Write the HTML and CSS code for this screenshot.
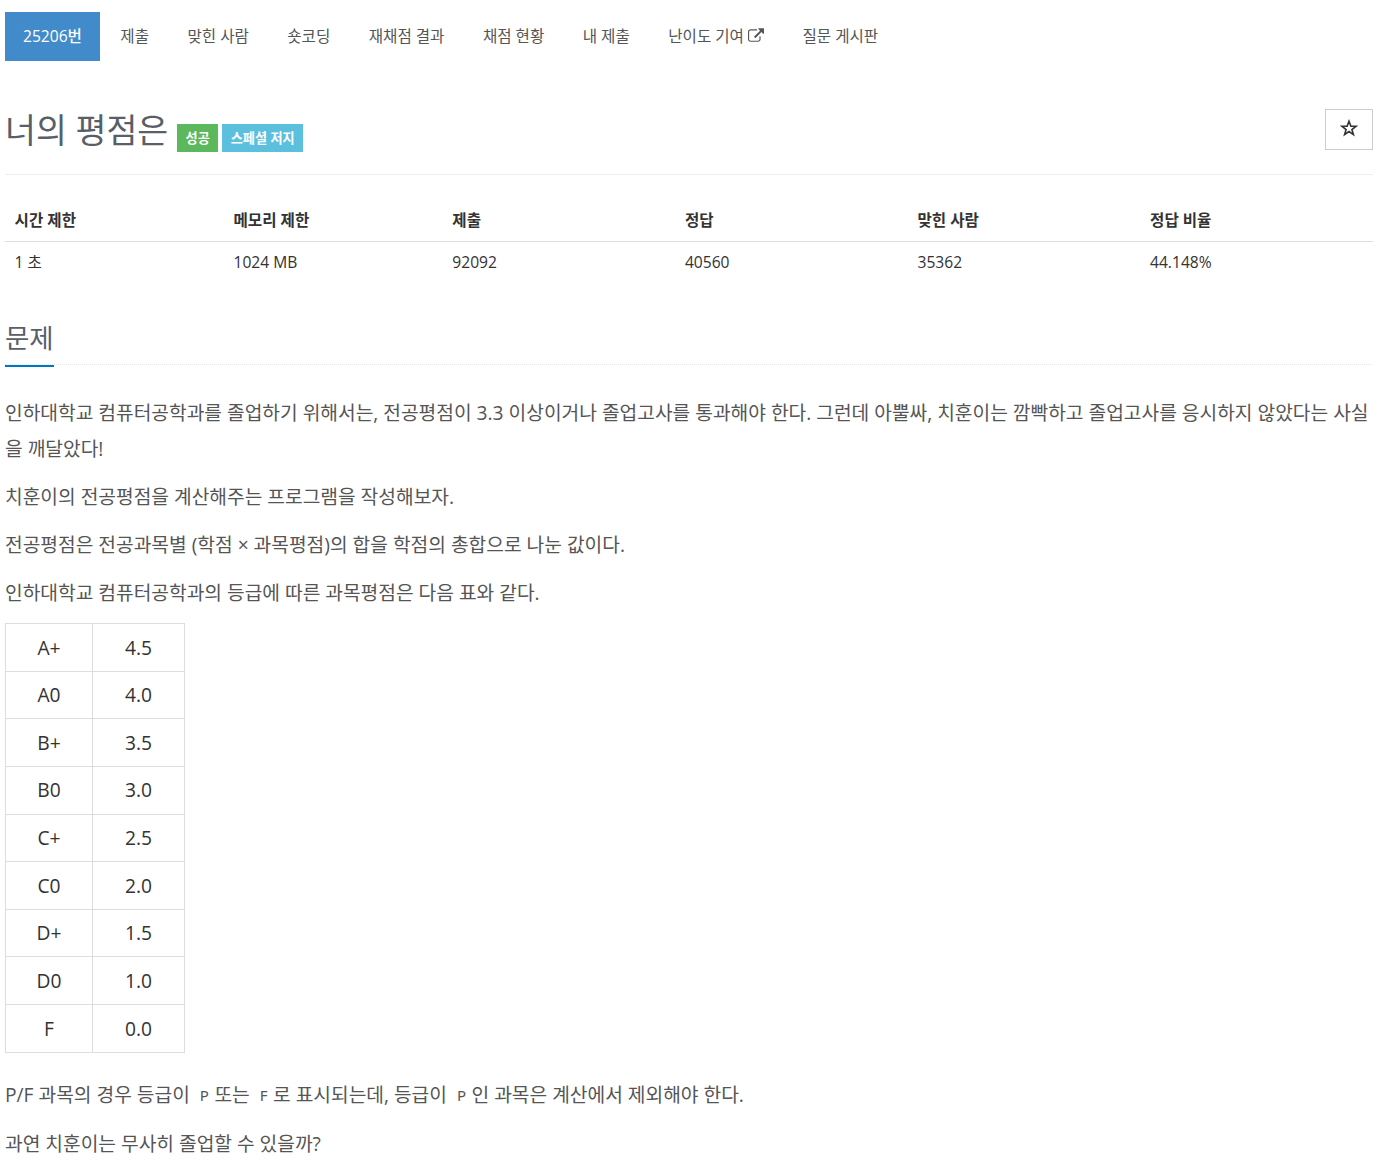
FILE: index.html
```html
<!DOCTYPE html>
<html lang="ko">
<head>
  <meta charset="UTF-8">
  <meta name="viewport" content="width=device-width, initial-scale=1.0">
  <title>25206번: 너의 평점은</title>
  <link rel="stylesheet" href="styles.css">
</head>
<body>
  <ul class="problem-menu">
    <li class="active"><a>25206번</a></li>
    <li><a>제출</a></li>
    <li><a>맞힌 사람</a></li>
    <li><a>숏코딩</a></li>
    <li><a>재채점 결과</a></li>
    <li><a>채점 현황</a></li>
    <li><a>내 제출</a></li>
    <li><a>난이도 기여 <svg class="external" viewBox="0 0 1792 1536"><path fill="currentColor" d="M1408 800v320q0 119-84.500 203.500T1120 1408H288q-119 0-203.500-84.500T0 1120V288q0-119 84.500-203.500T288 0h704q14 0 23 9t9 23v64q0 14-9 23t-23 9H288q-66 0-113 47t-47 113v832q0 66 47 113t113 47h832q66 0 113-47t47-113V800q0-14 9-23t23-9h64q14 0 23 9t9 23zM1792-64v512q0 26-19 45t-45 19-45-19l-176-176-652 652q-10 10-23 10t-23-10L695 855q-10-10-10-23t10-23l652-652-176-176q-19-19-19-45t19-45 45-19h512q26 0 45 19t19 45z" transform="translate(0 128)"/></svg></a></li>
    <li><a>질문 게시판</a></li>
  </ul>

  <div class="page-header">
    <h1>너의 평점은</h1>
    <span class="label label-success">성공</span>
    <span class="label label-info">스페셜 저지</span>
    <button class="favorite" aria-label="즐겨찾기">
      <svg viewBox="0 0 18 18"><path fill="none" stroke="#333" stroke-width="1.6" d="M9 2.200l1.900 5.100h5.100l-4.100 3.200 1.500 5.100L9 12.500l-4.400 3.100 1.500-5.100L2 7.300h5.100z"/></svg>
    </button>
  </div>

  <table class="problem-info">
    <thead>
      <tr><th class="narrow">시간 제한</th><th class="narrow">메모리 제한</th><th>제출</th><th>정답</th><th>맞힌 사람</th><th>정답 비율</th></tr>
    </thead>
    <tbody>
      <tr><td>1 초</td><td>1024 MB</td><td>92092</td><td>40560</td><td>35362</td><td>44.148%</td></tr>
    </tbody>
  </table>

  <div class="headline">
    <h2>문제</h2>
  </div>

  <div class="problem-text">
    <p>인하대학교 컴퓨터공학과를 졸업하기 위해서는, 전공평점이 3.3 이상이거나 졸업고사를 통과해야 한다. 그런데 아뿔싸, 치훈이는 깜빡하고 졸업고사를 응시하지 않았다는 사실을 깨달았다!</p>
    <p>치훈이의 전공평점을 계산해주는 프로그램을 작성해보자.</p>
    <p>전공평점은 전공과목별 (학점 × 과목평점)의 합을 학점의 총합으로 나눈 값이다.</p>
    <p>인하대학교 컴퓨터공학과의 등급에 따른 과목평점은 다음 표와 같다.</p>
    <table class="grade-table">
      <tr><td class="grade">A+</td><td>4.5</td></tr>
      <tr><td class="grade">A0</td><td>4.0</td></tr>
      <tr><td class="grade">B+</td><td>3.5</td></tr>
      <tr><td class="grade">B0</td><td>3.0</td></tr>
      <tr><td class="grade">C+</td><td>2.5</td></tr>
      <tr><td class="grade">C0</td><td>2.0</td></tr>
      <tr><td class="grade">D+</td><td>1.5</td></tr>
      <tr><td class="grade">D0</td><td>1.0</td></tr>
      <tr><td class="grade">F</td><td>0.0</td></tr>
    </table>
    <p class="note">P/F 과목의 경우 등급이 <code>P</code>또는 <code>F</code>로 표시되는데, 등급이 <code>P</code>인 과목은 계산에서 제외해야 한다.</p>
    <p>과연 치훈이는 무사히 졸업할 수 있을까?</p>
  </div>
</body>
</html>
```
FILE: styles.css
```css
* {
  box-sizing: border-box;
}

body {
  margin: 0;
  padding: 12px 15px 0 5px;
  height: 1167px;
  overflow: hidden;
  background: #fff;
  color: #333;
  font-family: "Open Sans", "Noto Sans CJK KR", sans-serif;
  font-size: 15.6px;
  line-height: 1.42857;
}

.problem-menu {
  display: flex;
  gap: 2.4px;
  margin: 0;
  padding: 0;
  list-style: none;
}

.problem-menu a {
  display: block;
  height: 49px;
  padding: 0 18px;
  line-height: 48px;
  color: #555;
  white-space: nowrap;
}

.problem-menu .active a {
  background: #428bca;
  color: #fff;
  font-weight: 500;
}

.external {
  width: 16px;
  height: 14px;
  vertical-align: 0;
}

.page-header {
  display: flex;
  align-items: flex-start;
  height: 114px;
  padding-top: 48px;
  border-bottom: 1px solid #eee;
}

h1 {
  margin: 0 9px 0 0;
  font-size: 33.6px;
  font-weight: 400;
  line-height: 42px;
  color: #585f69;
}

.label {
  height: 28px;
  margin: 15px 4px 0 0;
  padding: 0 8.4px;
  font-size: 13.2px;
  font-weight: 600;
  line-height: 28px;
  color: #fff;
}

.label-success {
  background: #5cb85c;
}

.label-info {
  background: #5bc0de;
}

.favorite {
  display: flex;
  align-items: center;
  justify-content: center;
  width: 48px;
  height: 41px;
  margin-left: auto;
  padding: 0 0 3px;
  background: #fff;
  border: 1px solid #ccc;
}

.favorite svg {
  width: 18px;
  height: 18px;
}

.problem-info {
  width: 100%;
  margin-top: 24px;
  border-collapse: collapse;
  table-layout: fixed;
}

.problem-info th,
.problem-info td {
  height: 42px;
  padding: 0 9.6px;
  text-align: left;
}

.problem-info th {
  border-bottom: 1px solid #ddd;
}

.problem-info .narrow {
  width: 16%;
}

.headline {
  display: flex;
  height: 49px;
  margin-top: 33px;
  border-bottom: 1px dotted #e4e9f0;
}

h2 {
  height: 51px;
  margin: 0;
  border-bottom: 2px solid #0076c0;
  font-size: 26.4px;
  font-weight: 400;
  line-height: 45px;
  color: #585f69;
}

.problem-text {
  margin-top: 30px;
  font-size: 19.22px;
}

.problem-text p {
  margin: 0 0 12px;
  line-height: 36px;
  color: #555;
  word-break: break-all;
}

.problem-text .note {
  margin-bottom: 13px;
}

.grade-table {
  width: 180px;
  margin-bottom: 24px;
  border-collapse: collapse;
  text-align: center;
}

.grade-table td {
  height: 47.63px;
  padding: 0;
  border: 1px solid #ddd;
}

.grade-table .grade {
  width: 87px;
}

code {
  padding: 0 5.5px 0 5px;
  font-family: "Noto Sans", sans-serif;
  font-size: 15px;
  vertical-align: 0.5px;
}
```
